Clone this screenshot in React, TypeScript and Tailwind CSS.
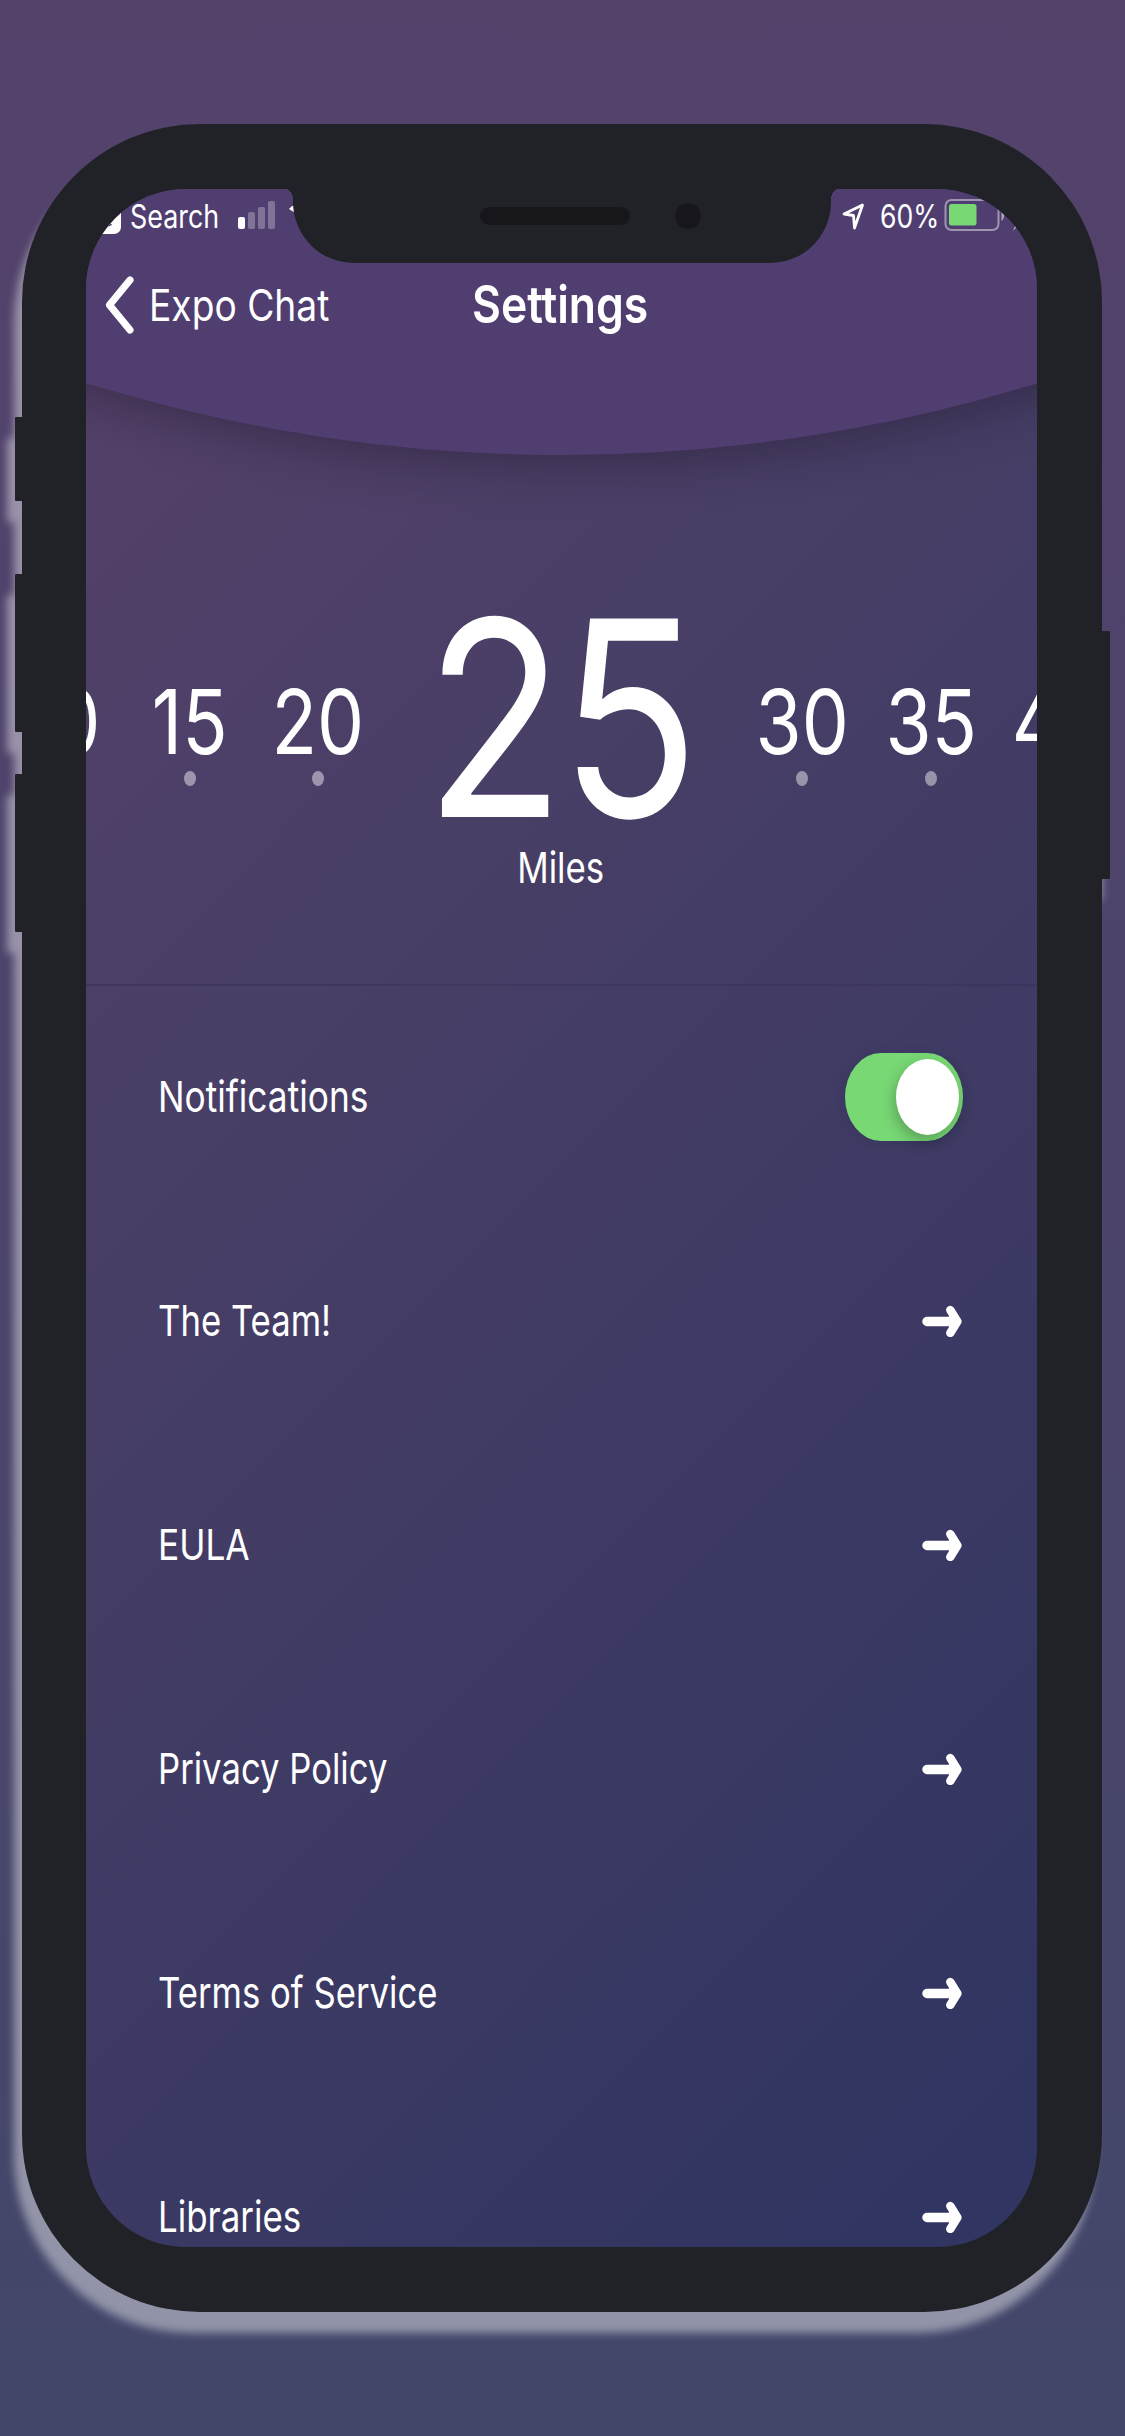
import React from "react";

type LabelProps = {
  children: React.ReactNode;
  className: string;
};

/* Condensed label: the class sets the font size, line height and horizontal scale. */
function Label({ children, className }: LabelProps) {
  return <span className={"inline-block whitespace-nowrap " + className}>{children}</span>;
}

function Arrow() {
  return (
    <svg className="mr-[1px] h-8 w-10" viewBox="0 0 40 32" fill="none" stroke="white" strokeLinecap="round" strokeLinejoin="round">
      <path d="M5 16.500H33" strokeWidth="9.4" />
      <path d="M28.3 5L35.4 16.500L28.3 28" strokeWidth="8.4" />
      <path d="M28 9L34 16.500L28 24Z" fill="white" strokeWidth="2" />
    </svg>
  );
}

function Toggle() {
  return (
    <div className="flex h-[88px] w-[118px] items-center justify-end rounded-[36px/44px] bg-[#78d874] pr-1 shadow-[0_2px_12px_rgba(30,25,60,0.15)]">
      <div className="h-[76px] w-[63px] rounded-[50%] bg-white shadow-[-2px_6px_14px_rgba(0,0,0,0.25)]" />
    </div>
  );
}

function StatusBar() {
  return (
    <div className="relative flex h-[64px] shrink-0 items-start justify-between text-white">
      <div className="flex">
        <svg className="mt-3 h-[33px] w-[35px]" viewBox="0 0 35 33">
          <rect x="-8" y="0" width="43" height="33" rx="7" fill="white" />
          <path d="M17 15L21 19L25.500 17L24 21.500L26 24L22.500 25.500L17 23Z" fill="#503e71" />
        </svg>
        <div className="mt-[8px] ml-[9px] w-[107px]">
          <Label className="origin-left scale-x-[0.84] text-[32px] leading-10">Search</Label>
        </div>
        <svg className="mt-3 h-7 w-[38px]" viewBox="0 0 38 28" fill="white">
          <rect x="1" y="16" width="7" height="12" rx="2" />
          <rect x="11" y="11" width="7" height="17" rx="2" opacity=".28" />
          <rect x="21" y="6" width="7" height="22" rx="2" opacity=".28" />
          <rect x="31" y="0" width="7" height="28" rx="2" opacity=".28" />
        </svg>
        <svg className="mt-[17px] ml-[14px] h-2 w-2" viewBox="0 0 8 8">
          <path d="M0 3L3 0L8 0V8Z" fill="white" />
        </svg>
      </div>
      <div className="flex pr-[17px]">
        <svg className="mt-[12px] h-[30px] w-6" viewBox="0 0 24 30" fill="none" stroke="white" strokeWidth="2.8" strokeLinejoin="round">
          <path d="M21.500 4L3 13L12.500 14.500L13.500 27Z" />
        </svg>
        <div className="mt-[8px] ml-[15px] w-[64px]">
          <Label className="origin-left scale-x-[0.83] text-[32px] leading-10">60%</Label>
        </div>
        <svg className="mt-[10px] h-9 w-[76px]" viewBox="0 0 76 36" fill="none">
          <rect x="1.5" y="1" width="53" height="30" rx="6" stroke="white" strokeOpacity=".45" strokeWidth="2" />
          <rect x="5" y="5" width="27.500" height="21.500" rx="2.500" fill="#78d874" />
          <path d="M57.500 9.500C61 11.500 61 20 57.500 22Z" fill="white" fillOpacity=".55" />
          <path d="M69 32L73 24V27Z" fill="white" />
        </svg>
      </div>
    </div>
  );
}

function Tick({ value }: { value: string }) {
  return (
    <div className="flex w-[128.400px] shrink-0 flex-col items-center">
      <Label className="scale-x-[0.83] text-[90px] leading-[90px]">{value}</Label>
      <span className="mt-[4px] h-[15px] w-3 rounded-[50%] bg-white/45" />
    </div>
  );
}

const rows = [
  { label: "The Team!", scale: "scale-x-[0.807]" },
  { label: "EULA", scale: "scale-x-[0.82]" },
  { label: "Privacy Policy", scale: "scale-x-[0.806]" },
  { label: "Terms of Service", scale: "scale-x-[0.807]" },
  { label: "Libraries", scale: "scale-x-[0.812]" },
];

export default function App() {
  return (
    <div className="flex h-[2436px] w-[1125px] overflow-hidden bg-linear-to-b from-[#54426b] via-[#4c446b] to-[#42476a] pt-[124px] pl-[22px] font-['Inter',sans-serif]">
      <div className="relative h-[2188px] w-[1080px] drop-shadow-[-8px_21px_4px_rgba(255,255,255,0.42)]">
        {/* side buttons */}
        <span className="absolute top-[293px] -left-[7px] h-[84px] w-5 rounded-[1px] bg-[#212227]" />
        <span className="absolute top-[450px] -left-[7px] h-[158px] w-5 rounded-[1px] bg-[#212227]" />
        <span className="absolute top-[650px] -left-[7px] h-[158px] w-5 rounded-[1px] bg-[#212227]" />
        <span className="absolute top-[507px] -right-[8px] h-[248px] w-5 rounded-[1px] bg-[#212227]" />

        <div className="relative h-full w-full rounded-[178px] bg-[#212227] pt-[65px] pl-[64px]">
          <div className="relative flex h-[2058px] w-[951px] flex-col overflow-hidden rounded-[100px] bg-[linear-gradient(135deg,#56426a_0%,#443d65_45%,#303561_95%)]">
            <div className="absolute bottom-[1792px] left-1/2 h-[4614px] w-[3846px] -translate-x-1/2 rounded-[50%] bg-[#503e71] shadow-[0_10px_50px_rgba(20,15,30,0.38)]" />

            <StatusBar />

            <header className="relative flex h-[104px] shrink-0 items-center text-white">
              <svg className="ml-[18px] h-[60px] w-[30px]" viewBox="0 0 30 60" fill="none" stroke="white" strokeWidth="7.200" strokeLinecap="round" strokeLinejoin="round">
                <path d="M26 5L5.500 30L26 55" />
              </svg>
              <div className="ml-[15px] w-[323px]">
                <Label className="origin-left scale-x-[0.845] text-[44px] leading-[56px]">Expo Chat</Label>
              </div>
              <Label className="origin-left scale-x-[0.855] text-[52px] leading-[56px] font-semibold">Settings</Label>
            </header>

            <section className="relative flex h-[629px] w-full shrink-0 flex-col border-b-2 border-[#3a3458]/60 pt-[226px] text-white">
              <div className="-ml-[89px] flex h-[258px] items-start">
                <div className="flex pt-[94px]">
                  <Tick value="10" />
                  <Tick value="15" />
                  <Tick value="20" />
                </div>
                <div className="flex w-[356px] shrink-0 justify-center">
                  <Label className="scale-x-[0.84] text-[273px] leading-[258px] pt-[6px] tracking-[-5.5px]">25</Label>
                </div>
                <div className="flex pt-[94px]">
                  <Tick value="30" />
                  <Tick value="35" />
                  <Tick value="40" />
                </div>
              </div>
              <div className="flex justify-center pr-[2px]">
                <Label className="scale-x-[0.81] text-[43px] leading-[52px]">Miles</Label>
              </div>
            </section>

            <main className="relative -mt-[1px] flex shrink-0 flex-col pr-[74px] pl-[72px] text-white">
              <div className="flex h-[224px] items-center justify-between">
                <Label className="origin-left scale-x-[0.82] pb-[2px] text-[43px] leading-[52px]">Notifications</Label>
                <Toggle />
              </div>
              {rows.map((row) => (
                <div key={row.label} className="flex h-[224px] items-center justify-between">
                  <Label className={"origin-left pb-[2px] text-[43px] leading-[52px] " + row.scale}>{row.label}</Label>
                  <Arrow />
                </div>
              ))}
            </main>
          </div>

          {/* notch */}
          <div className="absolute top-[64px] left-[261px] flex">
            <span className="h-[11px] w-[10px] overflow-hidden bg-[radial-gradient(ellipse_10px_11px_at_0%_100%,transparent_98%,#212227_100%)]" />
            <div className="relative h-[75px] w-[538px] rounded-b-[61px] bg-[#212227]">
              <span className="absolute top-[19px] left-[187px] h-[18px] w-[150px] rounded-full bg-[#17171b]" />
              <span className="absolute top-[15px] left-[382px] size-[26px] rounded-full bg-[#17171b]" />
            </div>
            <span className="h-[11px] w-[10px] overflow-hidden bg-[radial-gradient(ellipse_10px_11px_at_100%_100%,transparent_98%,#212227_100%)]" />
          </div>
        </div>
      </div>
    </div>
  );
}
